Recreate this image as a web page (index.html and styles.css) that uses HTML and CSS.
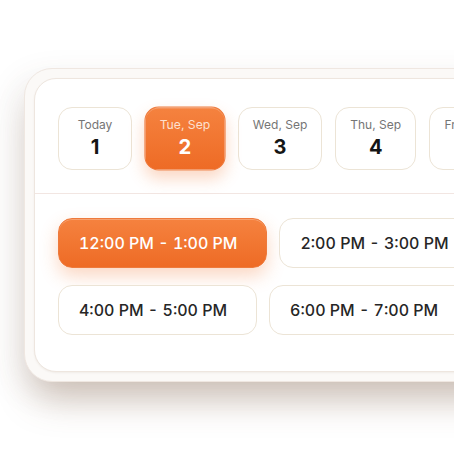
FILE: index.html
```html
<!DOCTYPE html>
<html>
<head>
<meta charset="utf-8">
<link rel="stylesheet" href="styles.css">
</head>
<body>
<div class="stage">
  <div class="frame">
    <div class="card">
      <div class="dates">
        <div class="date"><span class="label">Today</span><span class="num">1</span></div>
        <div class="date active"><span class="label">Tue, Sep</span><span class="num">2</span></div>
        <div class="date"><span class="label">Wed, Sep</span><span class="num">3</span></div>
        <div class="date"><span class="label">Thu, Sep</span><span class="num">4</span></div>
        <div class="date"><span class="label">Fri, Sep</span><span class="num">5</span></div>
      </div>
      <div class="divider"></div>
      <div class="slots">
        <div class="row">
          <div class="slot active">12:00 PM - 1:00 PM</div>
          <div class="slot">2:00 PM - 3:00 PM</div>
        </div>
        <div class="row">
          <div class="slot">4:00 PM - 5:00 PM</div>
          <div class="slot">6:00 PM - 7:00 PM</div>
        </div>
      </div>
    </div>
  </div>
</div>
</body>
</html>
```
FILE: styles.css
```css
html, body {
  margin: 0;
  padding: 0;
  background: #ffffff;
  overflow: hidden;
  width: 454px;
  height: 450px;
  font-family: Inter, "Noto Sans", sans-serif;
}
.stage {
  padding: 68px 0 0 24px;
}
.frame {
  width: 560px;
  height: 294px;
  padding: 9px;
  background: #fbf9f7;
  border: 1px solid #efe7e1;
  border-radius: 28px;
  box-shadow: 0 26px 36px -10px rgba(120, 85, 60, 0.34), -8px 10px 34px rgba(90, 70, 55, 0.09);
}
.card {
  height: 292px;
  background: #ffffff;
  border: 1px solid #eee6df;
  border-radius: 22px;
  box-shadow: 0 1px 2px rgba(120, 90, 70, 0.08);
}
.dates {
  display: flex;
  gap: 13px;
  padding: 28px 0 23px 23px;
}
.date {
  flex: none;
  min-width: 74px;
  box-sizing: border-box;
  height: 63px;
  padding: 9px 14px 12px;
  border: 1.5px solid #ece4d6;
  border-radius: 14px;
  display: flex;
  flex-direction: column;
  align-items: center;
  background: #fff;
}
.label {
  font-size: 12px;
  line-height: 16px;
  color: #757575;
  white-space: nowrap;
}
.num {
  margin-top: 2px;
  font-size: 20px;
  line-height: 24px;
  font-weight: 700;
  color: #151515;
}
.date.active {
  border-color: #ee7a3c;
  background: linear-gradient(180deg, #f5823f 0%, #ee6b25 100%);
  box-shadow: 0 8px 16px rgba(240, 110, 40, 0.28), inset 0 1px 0 rgba(255, 255, 255, 0.25);
  transform: scale(1.015);
}
.date.active .label { color: #fde0cf; }
.date.active .num { color: #ffffff; }
.divider {
  height: 1px;
  background: #f2e6e2;
}
.slots {
  padding: 24px 0 0 23px;
  display: flex;
  flex-direction: column;
  gap: 17px;
}
.row {
  display: flex;
  gap: 12px;
}
.slot {
  flex: none;
  box-sizing: border-box;
  height: 50px;
  padding: 0 29px 0 20px;
  display: flex;
  align-items: center;
  border: 1.5px solid #ece4d6;
  border-radius: 14px;
  font-size: 16px;
  font-weight: 500;
  font-variant-numeric: tabular-nums;
  color: #262626;
  white-space: nowrap;
  background: #fff;
}
.slot.active {
  border-color: #ee7a3c;
  background: linear-gradient(180deg, #f5823f 0%, #ee6b25 100%);
  color: #ffffff;
  box-shadow: 0 8px 18px rgba(240, 110, 40, 0.28), inset 0 1px 0 rgba(255, 255, 255, 0.25);
}
```
